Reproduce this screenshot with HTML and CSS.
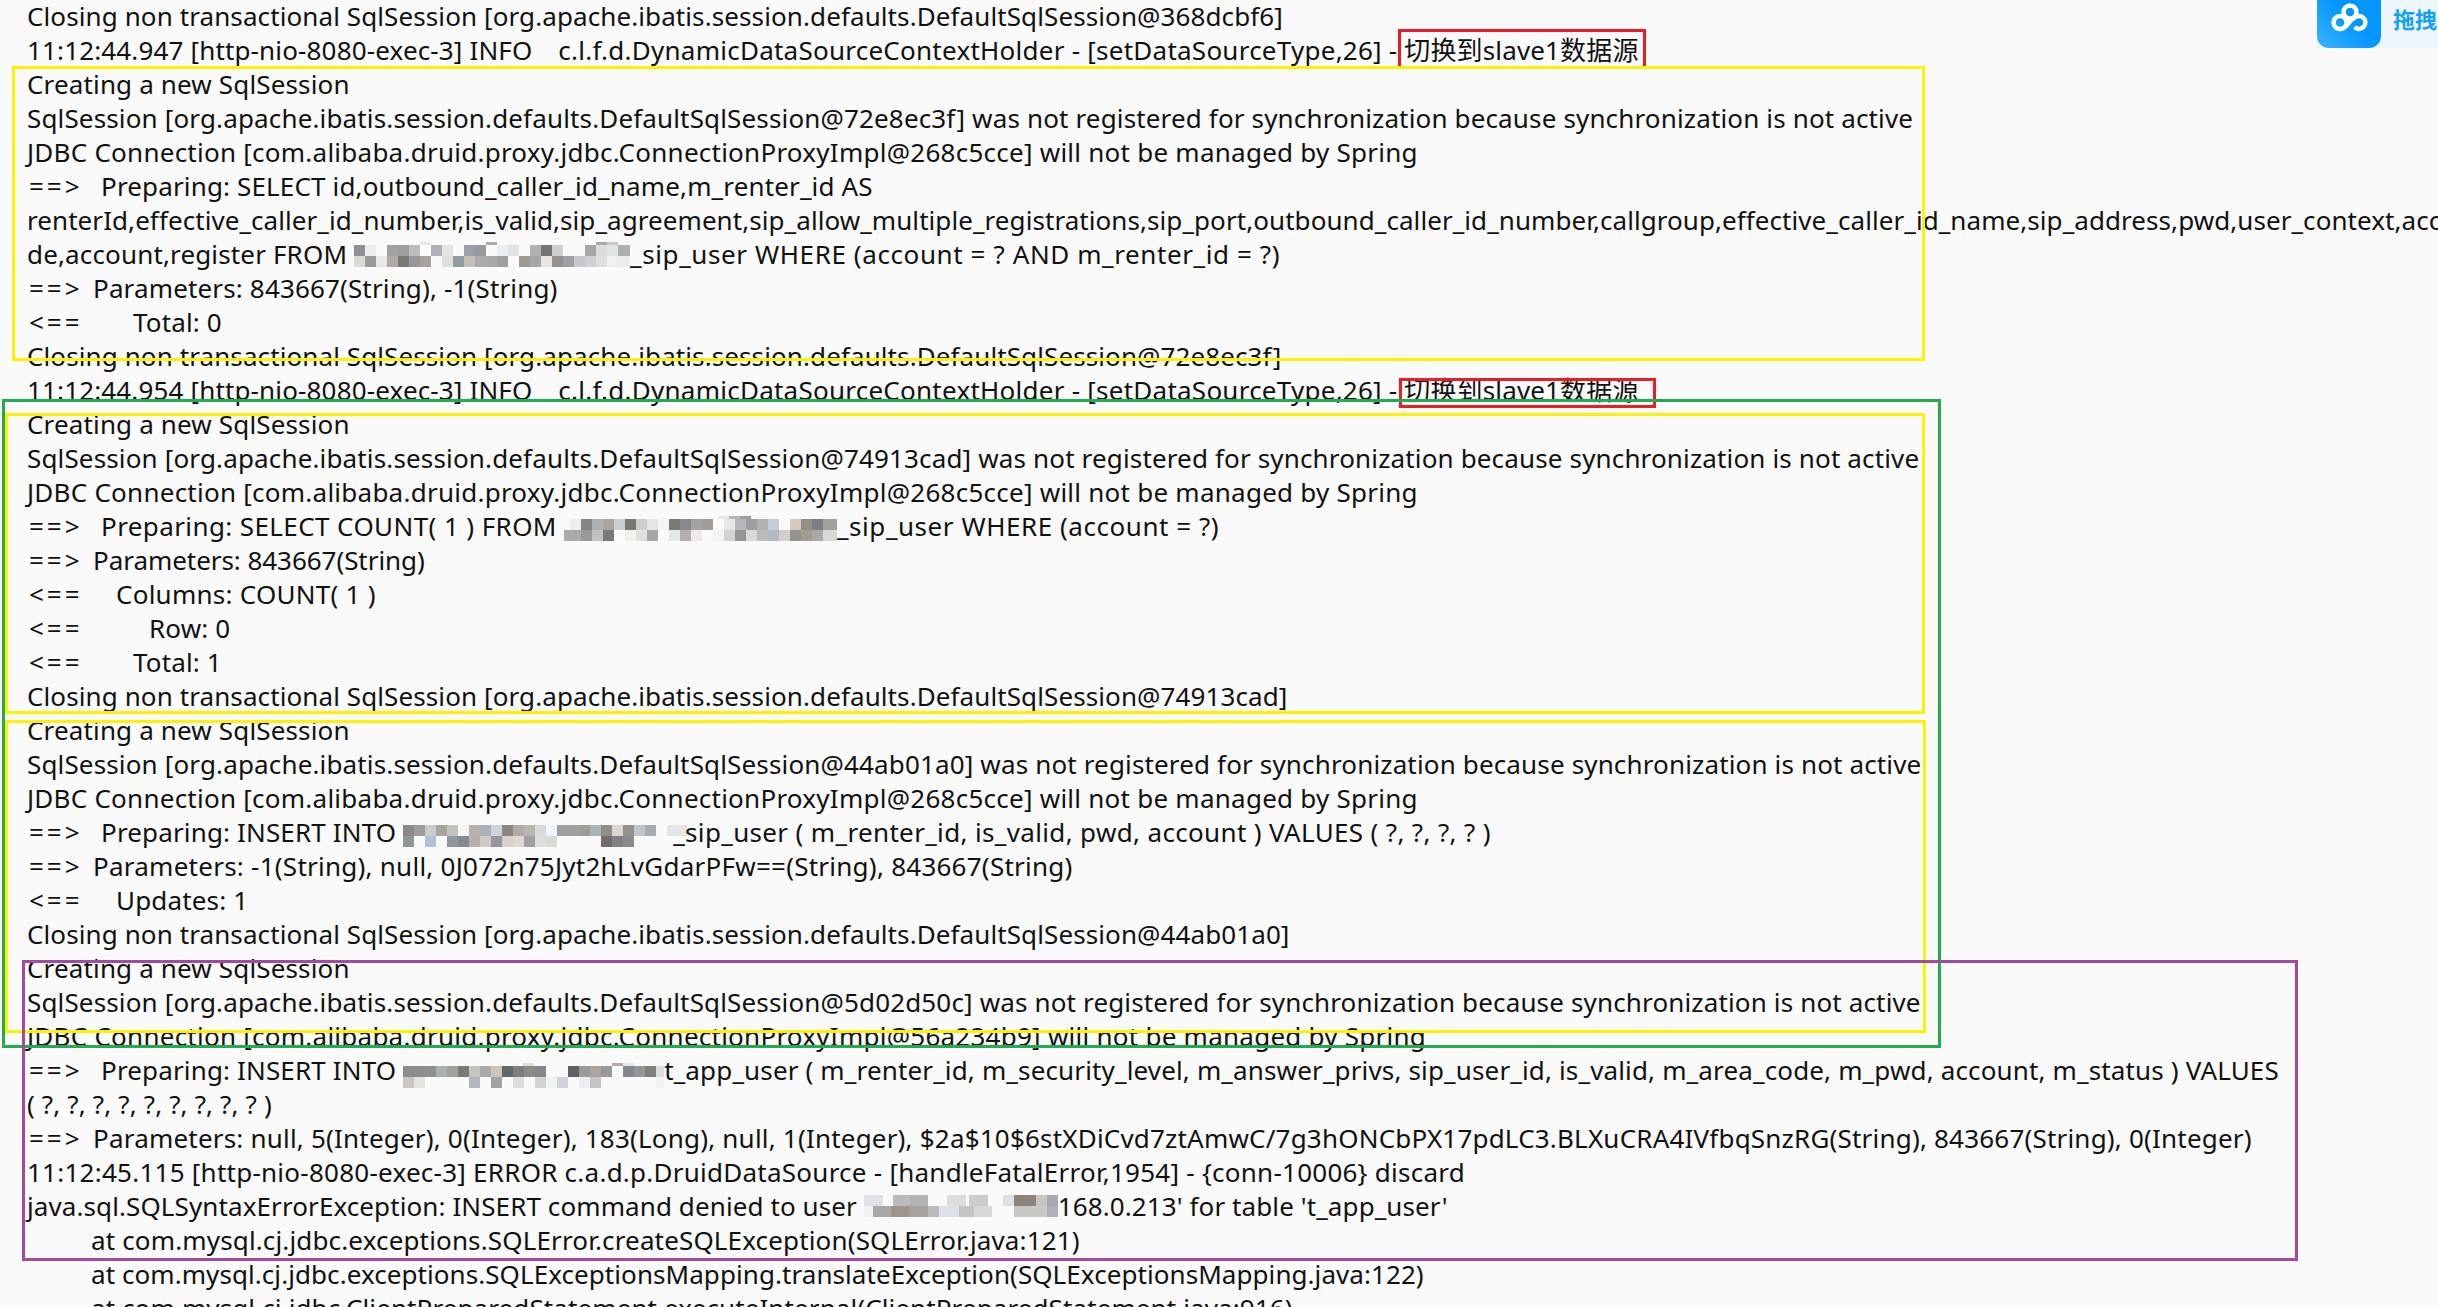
FILE: index.html
```html
<!DOCTYPE html>
<html lang="zh-CN">
<head>
<meta charset="utf-8">
<title>Log</title>
<link rel="stylesheet" href="styles.css">
</head>
<body>
<main class="log">
<div class="line sp10">Closing non transactional SqlSession [org.apache.ibatis.session.defaults.DefaultSqlSession@368dcbf6]</div>
<div class="line">11:12:44.947 [http-nio-8080-exec-3] INFO&nbsp; <span class="gap"></span><span class="sp25">c.l.f.d.DynamicDataSourceContextHolder - [setDataSourceType,26]</span> - 切换到slave1数据源</div>
<div class="line">Creating a new SqlSession</div>
<div class="line">SqlSession [org.apache.ibatis.session.defaults.DefaultSqlSession@72e8ec3f] was not registered for synchronization because synchronization is not active</div>
<div class="line sp25">JDBC Connection [com.alibaba.druid.proxy.jdbc.ConnectionProxyImpl@268c5cce] will not be managed by Spring</div>
<div class="line"><span class="arrow prep">==&gt;</span>Preparing: SELECT id,outbound_caller_id_name,m_renter_id AS</div>
<div class="line sp07">renterId,effective_caller_id_number,is_valid,sip_agreement,sip_allow_multiple_registrations,sip_port,outbound_caller_id_number,callgroup,effective_caller_id_name,sip_address,pwd,user_context,accountco</div>
<div class="line">de,account,register FROM <span class="mosaic m1"></span><span class="sp60">_sip_user WHERE (account = ? AND m_renter_id = ?)</span></div>
<div class="line"><span class="arrow param">==&gt;</span>Parameters: 843667(String), -1(String)</div>
<div class="line"><span class="arrow total">&lt;==</span>Total: 0</div>
<div class="line sp10">Closing non transactional SqlSession [org.apache.ibatis.session.defaults.DefaultSqlSession@72e8ec3f]</div>
<div class="line">11:12:44.954 [http-nio-8080-exec-3] INFO&nbsp; <span class="gap"></span><span class="sp25">c.l.f.d.DynamicDataSourceContextHolder - [setDataSourceType,26]</span> - 切换到slave1数据源</div>
<div class="line">Creating a new SqlSession</div>
<div class="line">SqlSession [org.apache.ibatis.session.defaults.DefaultSqlSession@74913cad] was not registered for synchronization because synchronization is not active</div>
<div class="line sp25">JDBC Connection [com.alibaba.druid.proxy.jdbc.ConnectionProxyImpl@268c5cce] will not be managed by Spring</div>
<div class="line"><span class="arrow prep">==&gt;</span><span class="sp40">Preparing: SELECT COUNT( 1 ) FROM </span><span class="mosaic m2"></span><span class="sp55">_sip_user WHERE (account = ?)</span></div>
<div class="line sp00"><span class="arrow param">==&gt;</span>Parameters: 843667(String)</div>
<div class="line sp25"><span class="arrow cols">&lt;==</span>Columns: COUNT( 1 )</div>
<div class="line"><span class="arrow row">&lt;==</span>Row: 0</div>
<div class="line"><span class="arrow total">&lt;==</span>Total: 1</div>
<div class="line sp10">Closing non transactional SqlSession [org.apache.ibatis.session.defaults.DefaultSqlSession@74913cad]</div>
<div class="line">Creating a new SqlSession</div>
<div class="line">SqlSession [org.apache.ibatis.session.defaults.DefaultSqlSession@44ab01a0] was not registered for synchronization because synchronization is not active</div>
<div class="line sp25">JDBC Connection [com.alibaba.druid.proxy.jdbc.ConnectionProxyImpl@268c5cce] will not be managed by Spring</div>
<div class="line"><span class="arrow prep">==&gt;</span>Preparing: INSERT INTO <span class="mosaic m3"></span><span class="sp35">_sip_user ( m_renter_id, is_valid, pwd, account ) VALUES ( ?, ?, ?, ? )</span></div>
<div class="line sp25"><span class="arrow param">==&gt;</span>Parameters: -1(String), null, 0J072n75Jyt2hLvGdarPFw==(String), 843667(String)</div>
<div class="line"><span class="arrow cols">&lt;==</span>Updates: 1</div>
<div class="line sp10">Closing non transactional SqlSession [org.apache.ibatis.session.defaults.DefaultSqlSession@44ab01a0]</div>
<div class="line">Creating a new SqlSession</div>
<div class="line">SqlSession [org.apache.ibatis.session.defaults.DefaultSqlSession@5d02d50c] was not registered for synchronization because synchronization is not active</div>
<div class="line sp25">JDBC Connection [com.alibaba.druid.proxy.jdbc.ConnectionProxyImpl@56a234b9] will not be managed by Spring</div>
<div class="line"><span class="arrow prep">==&gt;</span>Preparing: INSERT INTO <span class="mosaic m4"></span>t_app_user ( m_renter_id, m_security_level, m_answer_privs, sip_user_id, is_valid, m_area_code, m_pwd, account, m_status ) VALUES</div>
<div class="line">( ?, ?, ?, ?, ?, ?, ?, ?, ? )</div>
<div class="line sp20"><span class="arrow param">==&gt;</span>Parameters: null, 5(Integer), 0(Integer), 183(Long), null, 1(Integer), $2a$10$6stXDiCvd7ztAmwC/7g3hONCbPX17pdLC3.BLXuCRA4IVfbqSnzRG(String), 843667(String), 0(Integer)</div>
<div class="line sp25">11:12:45.115 [http-nio-8080-exec-3] ERROR c.a.d.p.DruidDataSource - [handleFatalError,1954] - {conn-10006} discard</div>
<div class="line sp10">java.sql.SQLSyntaxErrorException: INSERT command denied to user <span class="mosaic m5"></span>168.0.213' for table 't_app_user'</div>
<div class="line stack">at com.mysql.cj.jdbc.exceptions.SQLError.createSQLException(SQLError.java:121)</div>
<div class="line stack sp07">at com.mysql.cj.jdbc.exceptions.SQLExceptionsMapping.translateException(SQLExceptionsMapping.java:122)</div>
<div class="line stack sp10">at com.mysql.cj.jdbc.ClientPreparedStatement.executeInternal(ClientPreparedStatement.java:916)</div>
</main>
<div class="box red r1"></div>
<div class="box red r2"></div>
<div class="box yellow y1"></div>
<div class="box yellow y2"></div>
<div class="box yellow y3"></div>
<div class="box green g1"></div>
<div class="box purple p1"></div>
<div class="dock">
  <div class="dock-icon">
    <svg viewBox="0 0 64 48" width="64" height="48" fill="none" stroke="#fff" stroke-width="4.4">
      <circle cx="33" cy="12" r="6.5"/>
      <circle cx="23" cy="22.500" r="6.5"/>
      <path d="M28 27C31 25 33 20 37 18.200A6.500 6.500 0 1 1 37.500 27.200"/>
    </svg>
  </div>
  <span class="dock-text">拖拽上传</span>
</div>
</body>
</html>
```
FILE: styles.css
```css
html, body { margin: 0; padding: 0; }
body {
  width: 2438px;
  height: 1307px;
  overflow: hidden;
  position: relative;
  background: #fafafa;
}
.log {
  padding-left: 27px;
  color: #111;
  font-family: "Noto Sans", "Noto Sans CJK SC", sans-serif;
  font-size: 26px;
  letter-spacing: 0.15px;
}
.line {
  height: 34px;
  line-height: 33px;
  white-space: nowrap;
}
.stack { padding-left: 64px; }
.gap { display: inline-block; width: 12px; }
.sp00 { letter-spacing: -0.05px; }
.sp07 { letter-spacing: 0.07px; }
.sp10 { letter-spacing: 0.1px; }
.sp20 { letter-spacing: 0.2px; }
.sp25 { letter-spacing: 0.25px; }
.sp35 { letter-spacing: 0.35px; }
.sp40 { letter-spacing: 0.4px; }
.sp55 { letter-spacing: 0.55px; }
.sp60 { letter-spacing: 0.6px; }
.arrow {
  display: inline-block;
  letter-spacing: 3px;
  padding-left: 2px;
  box-sizing: border-box;
}
.prep { width: 74px; }
.param { width: 66px; }
.total { width: 106px; }
.cols { width: 89px; }
.row { width: 122px; }

.mosaic {
  display: inline-block;
  height: 25px;
  vertical-align: top;
  background-repeat: no-repeat;
}
.m1 {
  width: 276px;
  margin-top: 4px;
  background-image:
    linear-gradient(90deg, #fafafa 66px, #ece9e5 0 77px, #fafafa 0 132px, #aaa 0 143px, #fafafa 0 242px, #aaa 0 253px, #c8c8c8 0 264px, #fafafa 0),
    linear-gradient(90deg, #8e9298 11px, #ecedf0 0 22px, #fafafa 0 33px, #a4a2a0 0 44px, #a09e9c 0 55px, #bdbcb8 0 66px, #fafafa 0 77px, #b0b1b8 0 88px, #e4e3e0 0 99px, #fafafa 0 110px, #98a0a8 0 121px, #979a9c 0 132px, #fafafa 0 143px, #eaeff3 0 154px, #e2e2e0 0 165px, #fafafa 0 176px, #b3b2b2 0 187px, #737473 0 198px, #cecfcd 0 209px, #fafafa 0 231px, #a8a6a3 0 242px, #dcdde0 0 253px, #e0e5e8 0 264px, #aeb0ae 0),
    linear-gradient(90deg, #ddd9d4 11px, #9a9a9a 0 22px, #e6e8e8 0 33px, #b2a8a2 0 44px, #7c7a74 0 55px, #949a9c 0 66px, #a8a39a 0 77px, #fafafa 0 88px, #e2dfd9 0 99px, #8e9da3 0 110px, #c8c0b8 0 121px, #acaaaa 0 132px, #aaa9a9 0 143px, #a0a0a0 0 154px, #fafafa 0 165px, #a09a90 0 176px, #a3a6ab 0 187px, #e8e6e4 0 198px, #96918a 0 209px, #9da0a6 0 220px, #c5c8cd 0 231px, #d2d0ce 0 242px, #dcdfe1 0 253px, #f0f0f0 0 264px, #ebedef 0);
  background-size: 100% 3px, 100% 11px, 100% 11px;
  background-position: 0 0, 0 3px, 0 14px;
}
.m2 {
  width: 273px;
  margin-top: 6px;
  background-image:
    linear-gradient(90deg, #fafafa 154px, #e6e7e9 0 165px, #b3b6bc 0 176px, #9e9e9e 0 187px, #fafafa 0),
    linear-gradient(90deg, #fafafa 6px, #eeeeee 0 17px, #858585 0 28px, #acb0b3 0 39px, #aaa5a0 0 50px, #c9d1d4 0 61px, #7a7873 0 72px, #cfcdce 0 83px, #e6e5e3 0 94px, #f2f4f5 0 105px, #7a7874 0 116px, #868a8f 0 127px, #a2a2a2 0 138px, #a09b96 0 149px, #fafafa 0 160px, #e6e7e9 0 171px, #b3b6bc 0 182px, #9e9e9e 0 193px, #b3b0ae 0 204px, #c2cddd 0 215px, #fafafa 0 226px, #d5cabd 0 237px, #958e82 0 248px, #7e7f84 0 259px, #a3a19d 0),
    linear-gradient(90deg, #acaaa8 17px, #9a9a9a 0 28px, #c2c2c2 0 39px, #7b7973 0 50px, #fafbfa 0 61px, #f5efeb 0 72px, #e0dfdd 0 83px, #a7a6a2 0 94px, #fafafa 0 105px, #e0eae9 0 116px, #b9aea7 0 127px, #ebebeb 0 138px, #fafafa 0 149px, #f2f5f8 0 160px, #d2d2d2 0 171px, #989590 0 182px, #d5dade 0 193px, #bdb9b5 0 204px, #b6b9c0 0 215px, #d4cec8 0 226px, #92948e 0 237px, #a59c90 0 248px, #a9aaaa 0 259px, #d8d9d5 0);
  background-size: 100% 3px, 100% 11px, 100% 11px;
  background-position: 0 0, 0 3px, 0 14px;
}
.m3 {
  width: 284px;
  margin-top: 6px;
  margin-right: -14px;
  background-image:
    linear-gradient(90deg, #8a8a8a 11px, #9c9c9c 0 22px, #c8ccd0 0 33px, #a8a49e 0 44px, #c5c3be 0 55px, #f4f6f3 0 66px, #b8b2ae 0 77px, #adaeb8 0 88px, #cfd3da 0 99px, #8c8680 0 110px, #b0aaa5 0 121px, #bab6b0 0 132px, #d8dad9 0 143px, #f0f5fa 0 154px, #a0a0a0 0 176px, #a09d98 0 187px, #a9b4b9 0 198px, #918c84 0 209px, #dcd7d0 0 220px, #95938c 0 231px, #c0c5c9 0 242px, #a8acb0 0 253px, #fafafa 0 264px, #e2e6ea 0 275px, #e8e4de 0),
    linear-gradient(90deg, #8f9699 11px, #fafafa 0 22px, #b2c2d2 0 33px, #fafafa 0 44px, #8d999e 0 55px, #868a90 0 66px, #b4b0aa 0 77px, #cfcac8 0 88px, #95979c 0 99px, #d8d0ca 0 110px, #e0d8d0 0 121px, #a0a0a0 0 132px, #dcdedd 0 143px, #d8d8d5 0 154px, #fafafa 0 198px, #736c69 0 209px, #808186 0 220px, #8a8b8f 0 231px, #fafafa 0);
  background-size: 100% 11px, 100% 11px;
  background-position: 0 3px, 0 14px;
}
.m4 {
  width: 261px;
  margin-top: 9px;
  background-image:
    linear-gradient(90deg, #fafafa 120px, #dedede 0 131px, #fafafa 0 209px, #b5aca4 0 220px, #e8e8e8 0 231px, #fafafa 0),
    linear-gradient(90deg, #8a8c8e 11px, #8c8c8c 0 22px, #8f8f8f 0 33px, #a9b2b3 0 44px, #a3a09e 0 55px, #7a7b77 0 66px, #c6c4be 0 77px, #aaa8a8 0 88px, #cfc4b6 0 99px, #62676c 0 110px, #7d7e80 0 121px, #8e8a88 0 132px, #85868a 0 143px, #fafafa 0 165px, #606064 0 176px, #9a9a98 0 187px, #aca49c 0 198px, #9a9898 0 209px, #fafafa 0 220px, #85888c 0 231px, #959698 0 242px, #82807a 0 253px, #dcdcdc 0),
    linear-gradient(90deg, #c8c5c3 11px, #e8e2dc 0 22px, #fafafa 0 66px, #b2b6be 0 77px, #fafafa 0 88px, #a0a3a6 0 99px, #fafafa 0 110px, #dcdcdc 0 121px, #fafafa 0 132px, #d2d2d2 0 143px, #edf3f5 0 154px, #cfd4d8 0 165px, #fafafa 0 176px, #ecedf0 0 187px, #c2c3c5 0 198px, #fafafa 0 253px, #f2f2f2 0);
  background-size: 100% 3px, 100% 11px, 100% 11px;
  background-position: 0 0, 0 3px, 0 14px;
}
.m5 {
  width: 194px;
  margin-top: 2px;
  background-image:
    linear-gradient(90deg, #e0e2e6 19px, #fafafa 0 29px, #bbbbbb 0 46px, #b4b4b4 0 64px, #fafafa 0 83px, #dedcdc 0 102px, #fafafa 0 105px, #cccccc 0 124px, #fafafa 0 139px, #dde0e6 0 150px, #8c8479 0 172px, #c9c5c0 0 183px, #a8a8b0 0),
    linear-gradient(90deg, #f2f2f2 9px, #a9a9a9 0 27px, #a0948c 0 45px, #a5a2a0 0 64px, #bcbcbc 0 75px, #dce2ea 0 95px, #c4c4c4 0 110px, #d8d8d8 0 128px, #fafafa 0 150px, #c8c8c4 0 183px, #b0b0b8 0);
  background-size: 100% 11px, 100% 11px;
  background-position: 0 3px, 0 14px;
}

.box { position: absolute; box-sizing: border-box; border: 3px solid; }
.yellow { border-color: #fff200; }
.green { border-color: #22ac4f; }
.red { border-color: #ed1c24; }
.purple { border-color: #a349a4; }
.y1 { left: 12px; top: 66px; width: 1913px; height: 295px; }
.y2 { left: 5px; top: 413px; width: 1920px; height: 301px; }
.y3 { left: 5px; top: 720px; width: 1921px; height: 313px; }
.g1 { left: 2px; top: 399px; width: 1939px; height: 649px; }
.r1 { left: 1398px; top: 29px; width: 248px; height: 38px; border-bottom: 0; }
.r2 { left: 1399px; top: 378px; width: 257px; height: 30px; }
.p1 { left: 22px; top: 960px; width: 2276px; height: 301px; }

.dock {
  position: absolute;
  left: 2317px;
  top: 0;
  width: 121px;
  height: 48px;
  display: flex;
  background: #eef7ff;
  overflow: hidden;
}
.dock-icon {
  flex: none;
  width: 64px;
  height: 48px;
  background: linear-gradient(45deg, #3bb4ff, #0095ff 60%);
  border-radius: 0 0 12px 12px;
}
.dock-icon svg { display: block; }
.dock-text {
  flex: none;
  font-family: "Noto Sans CJK SC", sans-serif;
  font-weight: 700;
  font-size: 22px;
  line-height: 36px;
  color: #12a0fb;
  margin-left: 12px;
  white-space: nowrap;
}
```
